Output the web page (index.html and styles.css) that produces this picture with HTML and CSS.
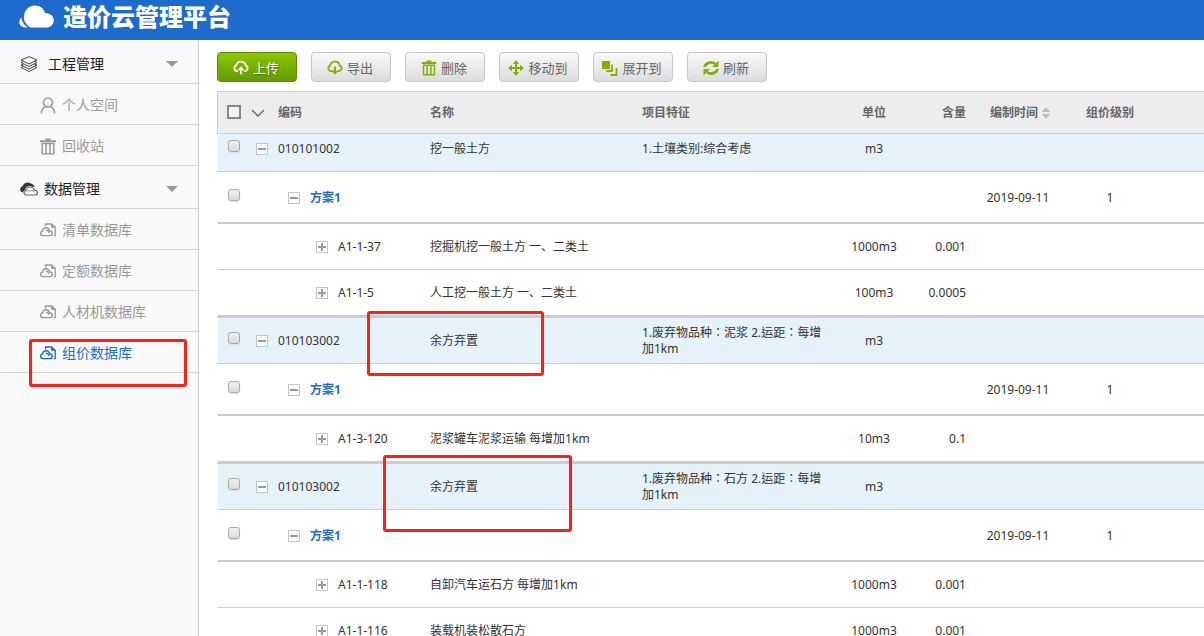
FILE: index.html
```html
<!DOCTYPE html>
<html lang="zh-CN">
<head>
<meta charset="utf-8">
<title>造价云管理平台</title>
<link rel="stylesheet" href="styles.css">
</head>
<body>
<svg class="defs" aria-hidden="true">
  <symbol id="i-doc" viewBox="0 0 16 14"><path d="M5.500 3.500V1H11.500L15.200 4.200V12.600H13.800" fill="none" stroke="currentColor" stroke-width="1.300"/><path d="M11 .5l4.800 4.300H11z" fill="currentColor"/><path d="M3.200 12.600A2.300 2.300 0 0 1 2.600 8C2.800 6 4.400 4.700 6 4.700c1.800 0 3.200 1.200 3.400 3.100 1.800.2 2.900 1.200 2.900 2.600a2.200 2.200 0 0 1-2.100 2.200z" fill="#f9f9f9" stroke="currentColor" stroke-width="1.400"/><path d="M6 7.200c1.500.1 2.700 1.200 3 2.800" fill="none" stroke="currentColor" stroke-width="1.200"/></symbol>
  <symbol id="i-trash" viewBox="0 0 16 17"><path d="M5.500 1.500h5M0 3.200h16" fill="none" stroke="currentColor" stroke-width="2"/><path d="M2.200 5.500V15.800H13.800V5.500M1.500 5.500h13M6 6v9M10 6v9" fill="none" stroke="currentColor" stroke-width="1.600"/></symbol>
</svg>
<div class="app">
  <header class="topbar">
    <svg class="logo" viewBox="0 0 36 24" aria-hidden="true"><path d="M8 22.500C3.500 22.500.8 20.500.8 17c0-2 .8-3.500 2-4.500C3.300 16.500 5.500 20 9.500 22.500zM12 22.500C7.500 20 4.800 15.500 5.500 11.500 6 5 10.500.5 16.500.5 21.500.5 25.500 3.500 26.500 8c5 0 8.800 3 8.800 7.200 0 4.300-3.300 7.300-7.300 7.300z" fill="#fff"/></svg>
    <h1 class="title">造价云管理平台</h1>
  </header>
  <div class="body">
    <nav class="side">
      <button class="group wide"><svg class="g-icon" viewBox="0 0 18 16"><g fill="#f9f9f9" stroke="#444" stroke-width="1"><path d="M1 11.500 9 8l8 3.500-8 4z"/><path d="M1 9 9 5.500 17 9l-8 4z"/><path d="M1 6.500 9 3l8 3.500-8 4z"/><path d="M1 4 9 .7 17 4 9 8z"/></g></svg><span>工程管理</span><i class="caret"></i></button>
      <a class="item" href="#"><svg class="s-icon" viewBox="0 0 16 17"><g fill="none" stroke="currentColor" stroke-width="1.600"><circle cx="8" cy="5.500" r="4.500"/><path d="M1.500 16.500c0-3.800 2-6.300 4.500-7M14.500 16.500c0-3.800-2-6.300-4.500-7"/></g></svg>个人空间</a>
      <a class="item" href="#"><svg class="s-icon"><use href="#i-trash"/></svg>回收站</a>
      <button class="group"><svg class="g-icon" viewBox="0 0 18 14"><path d="M3 10.500C.8 10 0 8.500.2 7 .5 5.500 1.500 4.700 2.500 4.500 3.500 1.500 6 0 8.500.5L13 2.500l2 2.500-2-.2C8.500 3 5.500 5 5 8c-1 .5-1.800 1.300-2 2.500z" fill="#333"/><path d="M7 13c-2 0-3-1-3-2.300s1-2.200 2-2.400C6.500 6 8.300 5 10 5c2.200 0 3.600 1.300 4 3.200 2 0 3.400 1 3.400 2.500S16.300 13 15 13z" fill="#fff" stroke="#666" stroke-width="1.200"/><path d="M6.500 9.500c1-1 2.500-1 3.500-.2 1.200-1.200 3.200-1 4 .7" fill="none" stroke="#888" stroke-width="1"/></svg><span>数据管理</span><i class="caret"></i></button>
      <a class="item" href="#"><svg class="d-icon"><use href="#i-doc"/></svg>清单数据库</a>
      <a class="item" href="#"><svg class="d-icon"><use href="#i-doc"/></svg>定额数据库</a>
      <a class="item" href="#"><svg class="d-icon"><use href="#i-doc"/></svg>人材机数据库</a>
      <a class="item active" href="#"><svg class="d-icon"><use href="#i-doc"/></svg>组价数据库<i class="mark mark-nav"></i></a>
    </nav>
    <main class="main">
      <div class="tools">
        <button class="btn primary"><svg viewBox="0 0 18 16"><path d="M5.500 11.500H4.500A3.400 3.400 0 0 1 3.600 5 5.500 5.500 0 0 1 14.300 5a3.400 3.400 0 0 1-.8 6.500h-1" fill="none" stroke="currentColor" stroke-width="2"/><path d="M9 6l4 4.500H10.200V15H7.800V10.500H5z" fill="currentColor"/></svg>上传</button>
        <button class="btn"><svg viewBox="0 0 18 16"><path d="M6.500 11.500H4.500A3.400 3.400 0 0 1 3.600 5 5.500 5.500 0 0 1 14.300 5a3.400 3.400 0 0 1-.8 6.500h-2" fill="none" stroke="currentColor" stroke-width="2"/><path d="M9 15.500l4-4.500H10.200V6.500H7.800V11H5z" fill="currentColor"/></svg>导出</button>
        <button class="btn"><svg viewBox="0 0 16 17"><use href="#i-trash"/></svg>删除</button>
        <button class="btn"><svg viewBox="0 0 16 16"><path d="M8 3v10M3 8h10" stroke="currentColor" stroke-width="2"/><path d="M8 0l3.200 4H4.800zM8 16l-3.200-4h6.400zM0 8l4-3.200v6.400zM16 8l-4 3.200V4.800z" fill="currentColor"/></svg>移动到</button>
        <button class="btn"><svg viewBox="0 0 16 16"><path d="M0 1h8v8H0z" fill="currentColor"/><path d="M10 4.500v6.500H4.500M14.500 8v7H8.500" fill="none" stroke="currentColor" stroke-width="1.800"/></svg>展开到</button>
        <button class="btn"><svg viewBox="0 0 16 16"><path d="M1.500 7C2.500 3 8 .8 12.200 4M14.500 9c-1 4-6.500 6.200-10.700 3" fill="none" stroke="currentColor" stroke-width="2.800"/><path d="M15.500.5V7H9zM.5 15.500V9H7z" fill="currentColor"/></svg>刷新</button>
      </div>
      <table class="grid">
        <colgroup><col class="c-check"><col class="c-code"><col class="c-name"><col class="c-feat"><col class="c-unit"><col class="c-qty"><col class="c-date"><col class="c-level"><col></colgroup>
        <thead>
          <tr><th><input class="all" type="checkbox" aria-label="全选"></th><th class="code"><div class="cell head"><svg class="chev" viewBox="0 0 14 8" aria-hidden="true"><path d="M1 1l6 6 6-6" fill="none" stroke="#666" stroke-width="1.300"/></svg>编码</div></th><th>名称</th><th>项目特征</th><th class="mid">单位</th><th class="num">含量</th><th class="mid"><div class="sort">编制时间<svg viewBox="0 0 8 12" aria-hidden="true"><path d="M0 5l4-5 4 5zM0 7h8l-4 5z" fill="#bbb"/></svg></div></th><th class="mid">组价级别</th><th></th></tr>
        </thead>
        <tbody>
          <tr class="lv1 first"><td><input class="pick" type="checkbox" aria-label="选择 010101002"></td><td class="code"><div class="cell"><button class="tog" aria-label="收起"></button>010101002</div></td><td>挖一般土方</td><td>1.土壤类别:综合考虑</td><td class="mid">m3</td><td></td><td></td><td></td><td></td></tr>
          <tr class="lv2"><td><input class="pick" type="checkbox" aria-label="选择方案1"></td><td class="code"><div class="cell"><button class="tog" aria-label="收起"></button><a href="#">方案1</a></div></td><td></td><td></td><td></td><td></td><td class="mid">2019-09-11</td><td class="mid">1</td><td></td></tr>
          <tr class="lv3"><td></td><td class="code"><div class="cell"><button class="tog plus" aria-label="展开"></button>A1-1-37</div></td><td>挖掘机挖一般土方 一、二类土</td><td></td><td class="mid">1000m3</td><td class="num">0.001</td><td></td><td></td><td></td></tr>
          <tr class="lv3 last"><td></td><td class="code"><div class="cell"><button class="tog plus" aria-label="展开"></button>A1-1-5</div></td><td>人工挖一般土方 一、二类土</td><td></td><td class="mid">100m3</td><td class="num">0.0005</td><td></td><td></td><td></td></tr>
          <tr class="lv1"><td><input class="pick" type="checkbox" aria-label="选择 010103002"></td><td class="code"><div class="cell"><button class="tog" aria-label="收起"></button>010103002</div></td><td class="anchor">余方弃置<i class="mark mark-a"></i></td><td lang="zh-TW">1.废弃物品种：泥浆 2.运距：每增加1km</td><td class="mid">m3</td><td></td><td></td><td></td><td></td></tr>
          <tr class="lv2"><td><input class="pick" type="checkbox" aria-label="选择方案1"></td><td class="code"><div class="cell"><button class="tog" aria-label="收起"></button><a href="#">方案1</a></div></td><td></td><td></td><td></td><td></td><td class="mid">2019-09-11</td><td class="mid">1</td><td></td></tr>
          <tr class="lv3 last"><td></td><td class="code"><div class="cell"><button class="tog plus" aria-label="展开"></button>A1-3-120</div></td><td>泥浆罐车泥浆运输 每增加1km</td><td></td><td class="mid">10m3</td><td class="num">0.1</td><td></td><td></td><td></td></tr>
          <tr class="lv1"><td><input class="pick" type="checkbox" aria-label="选择 010103002"></td><td class="code"><div class="cell"><button class="tog" aria-label="收起"></button>010103002</div></td><td class="anchor">余方弃置<i class="mark mark-b"></i></td><td lang="zh-TW">1.废弃物品种：石方 2.运距：每增加1km</td><td class="mid">m3</td><td></td><td></td><td></td><td></td></tr>
          <tr class="lv2"><td><input class="pick" type="checkbox" aria-label="选择方案1"></td><td class="code"><div class="cell"><button class="tog" aria-label="收起"></button><a href="#">方案1</a></div></td><td></td><td></td><td></td><td></td><td class="mid">2019-09-11</td><td class="mid">1</td><td></td></tr>
          <tr class="lv3"><td></td><td class="code"><div class="cell"><button class="tog plus" aria-label="展开"></button>A1-1-118</div></td><td>自卸汽车运石方 每增加1km</td><td></td><td class="mid">1000m3</td><td class="num">0.001</td><td></td><td></td><td></td></tr>
          <tr class="lv3"><td></td><td class="code"><div class="cell"><button class="tog plus" aria-label="展开"></button>A1-1-116</div></td><td>装载机装松散石方</td><td></td><td class="mid">1000m3</td><td class="num">0.001</td><td></td><td></td><td></td></tr>
        </tbody>
      </table>
    </main>
  </div>
</div>
</body>
</html>
```

FILE: styles.css
```css
* { box-sizing: border-box; }
body { margin: 0; background: #fff; color: #333; font: 12px/16px "Noto Sans", "Noto Sans CJK SC", sans-serif; }
button { font: inherit; color: inherit; border: 0; padding: 0; background: none; cursor: pointer; }
a { color: inherit; text-decoration: none; }
.defs { display: none; }
.app { height: 100vh; display: flex; flex-direction: column; overflow: hidden; }
.topbar { flex: none; height: 40px; background: #1c6bcd; display: flex; align-items: center; gap: 8px; padding: 0 18px 6px; }
.logo { width: 37px; height: 24px; }
.title { margin: 0; color: #fff; font-size: 24px; line-height: 32px; font-weight: 900; }
.body { flex: 1; min-height: 0; display: flex; padding-top: 1px; }

.side { flex: none; width: 199px; background: #f9f9f9; border-right: 1px solid #ccc; font-size: 14px; line-height: 20px; }
.group, .item { display: flex; align-items: center; width: 100%; border-bottom: 1px solid #d4d4d4; }
.group { height: 43px; padding: 3px 20px 0; gap: 6px; color: #222; }
.group.wide { gap: 10px; }
.g-icon { width: 18px; height: 16px; }
.caret { margin-left: auto; border: 6px solid transparent; border-top-color: #999; border-bottom: 0; }
.item { position: relative; height: 41px; padding: 2px 0 0 40px; gap: 6px; color: #999; }
.item.active { color: #1c6bcd; }
.s-icon { width: 16px; height: 17px; }
.d-icon { width: 16px; height: 14px; }

.main { flex: 1; min-width: 0; padding: 11px 0 0 18px; overflow: hidden; }
.tools { display: flex; gap: 14px; padding-bottom: 9px; }
.btn { width: 80px; height: 30px; display: flex; align-items: center; justify-content: center; gap: 4px; padding: 2px 2px 0 0; font-size: 13px; color: #666; border: 1px solid #c6c6c6; border-radius: 4px; background: linear-gradient(#f9f9f9, #dcdcdc); }
.btn svg { width: 16px; height: 16px; color: #83b000; }
.btn.primary { color: #fff; border-color: #5c8a00; background: linear-gradient(#8bc800, #649a00); text-shadow: 1px 1px 1px #4a7000; }
.btn.primary svg { color: #fff; }

.grid { width: 100%; table-layout: fixed; border-collapse: separate; border-spacing: 0; }
.c-check { width: 33px; }
.c-code { width: 170px; }
.c-name { width: 212px; }
.c-feat { width: 200px; }
.c-unit { width: 84px; }
.c-qty { width: 60px; }
.c-date { width: 84px; }
.c-level { width: 100px; }
th, td { padding: 0 10px; text-align: left; vertical-align: middle; border-bottom: 1px solid #ccc; }
th { height: 43px; color: #666; background: #ededed; border-top: 1px solid #ccc; }
th:first-child { border-left: 1px solid #ccc; padding: 0 0 2px 9px; }
td:first-child { border-left: 1px solid #fff; padding: 0 0 6px 10px; }
th.mid, td.mid { text-align: center; padding: 0; }
th.num, td.num { text-align: right; }
th.code, td.code { padding: 0 0 0 6px; }
.cell { display: flex; align-items: center; gap: 10px; }
.head { margin-left: -5px; gap: 13px; }
.chev { width: 14px; height: 8px; }
.sort { display: flex; align-items: center; justify-content: center; gap: 4px; padding-left: 4px; }
.sort svg { width: 8px; height: 12px; }

.lv1 td { height: 46px; background: #e5f2fa; }
.lv1.first td { height: 38px; padding-bottom: 8px; }
.lv1.first td:first-child { padding-bottom: 14px; }
.lv2 td { height: 52px; border-bottom-width: 2px; }
.lv2 td.code, .lv2 td.mid { padding-top: 2px; }
.lv2 td:first-child { padding-bottom: 4px; }
.lv2 .cell { padding-left: 32px; font-weight: 700; color: #1c6bcd; }
.lv3 td { height: 46px; }
.lv3 .cell { padding-left: 60px; }
.lv3.last td { height: 48px; border-bottom-width: 3px; }

input { appearance: none; display: block; margin: 0; }
.all { width: 14px; height: 14px; border: 2px solid #888; background: #f4f4f4; }
.pick { width: 12px; height: 12px; border: 1px solid #aaa; border-radius: 3px; background: linear-gradient(#eee, #dcdcdc); box-shadow: 0 1px 1px #ddd; }
.tog { width: 12px; height: 12px; border: 1px solid #c4c4c4; background: linear-gradient(#999, #999) center / 8px 2px no-repeat #fff; }
.tog.plus { background: linear-gradient(#999, #999) center / 8px 2px no-repeat, linear-gradient(#999, #999) center / 2px 8px no-repeat #fff; }

/* highlight frames drawn over the content */
.anchor { position: relative; }
.mark { position: absolute; z-index: 2; border: 3px solid #ff2015; border-radius: 3px; pointer-events: none; }
.mark-nav { left: 29px; top: 7px; width: 158px; height: 48px; }
.mark-a { left: -53px; top: -7px; width: 177px; height: 65px; }
.mark-b { left: -37px; top: -9px; width: 189px; height: 77px; }
```
